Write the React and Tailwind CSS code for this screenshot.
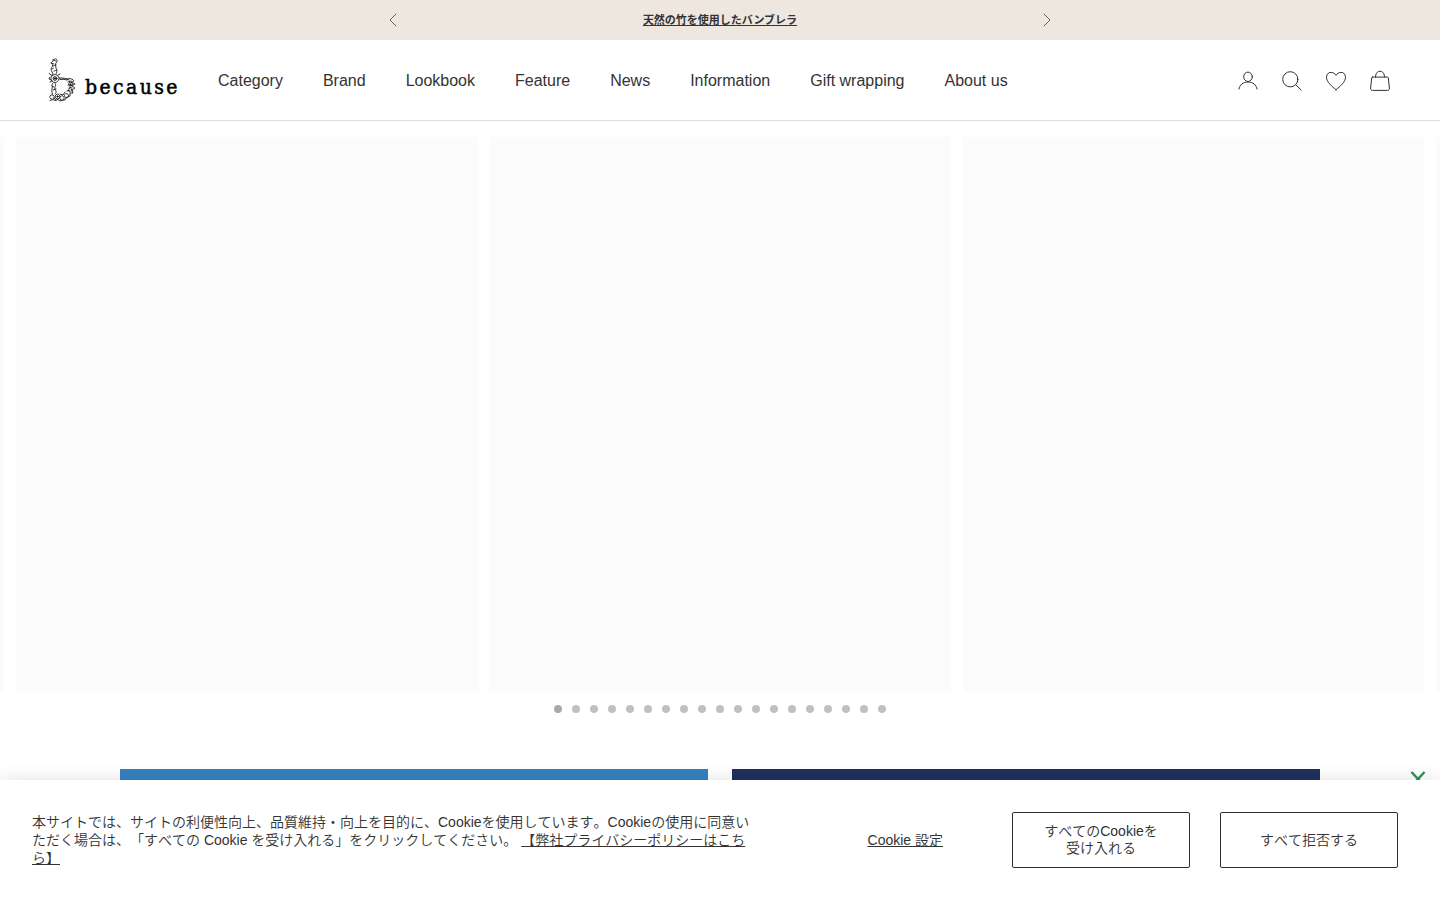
import clsx from "clsx";

const navItems = [
  "Category",
  "Brand",
  "Lookbook",
  "Feature",
  "News",
  "Information",
  "Gift wrapping",
  "About us",
];

const SLIDE_COUNT = 19;

// bouquet shaped like a "b"
const LogoMark = () => (
  <svg
    width="28"
    height="46"
    viewBox="0 0 28 46"
    fill="none"
    stroke="#111"
    strokeWidth="0.85"
    strokeLinecap="round"
    className="shrink-0"
  >
    <path
      d="M7 2c-3 0-1 2-3 3s2 2 0 5 0 4 1 7l-1 1M8 2c2 1 1 3 0 4s0 4 0 5 2 3 0 6"
      strokeDasharray="3 0.8"
    />
    <path d="M5 3l3 1M3 6l3 1M5 9l3-1M4 12l2-1M6 14l3-1" strokeDasharray="1.5 1" />
    <circle cx="7" cy="21.5" r="4" strokeDasharray="4 0.8" />
    <circle cx="7" cy="21.5" r="1.9" />
    <circle cx="7" cy="21.5" r="0.8" fill="#222" />
    <path d="M1 16.5l3 2M2 20l-1 2 2 1M10 18l2-1M2 25l2-1" />
    <path d="M11 21c4 0 7 0 10 2M12 22.5c3-.5 5 0 7 .5" strokeWidth="0.9" />
    <path
      d="M19 22c3-1 6 0 7 2l-3 1 4 2-3 2 3 2-3 2 1 3-3 0 0 3-2 1"
      strokeDasharray="2.5 0.7"
    />
    <path d="M20 25l3-1M20 28l4 0M21 30l3 1M19 34l3-1M22 26l1 3" />
    <circle cx="22.5" cy="27" r="1.9" strokeDasharray="2 1" />
    <circle cx="22" cy="33" r="1.9" strokeDasharray="2 1" />
    <path
      d="M5 26c-2 2 0 4-1 6s1 4 0 6M7 26c2 2-1 4 0 6s2 3 0 5"
      strokeDasharray="3 0.9"
    />
    <path d="M4 29l2 1M5 33l3-1" />
    <circle cx="4" cy="40" r="2.2" strokeDasharray="2 1" />
    <circle cx="9.5" cy="39.5" r="2.4" strokeDasharray="3 0.7" />
    <circle cx="9.5" cy="39.5" r="0.7" fill="#222" />
    <circle cx="14" cy="41" r="2.2" strokeDasharray="2 0.8" />
    <circle cx="18.5" cy="38.5" r="2" strokeDasharray="1.5 0.8" />
    <path d="M2 43.5l3-1 2 1 3-1 2 1.5 3-1 2 0 1-2 2-1M6 41l2 2M12 37l3 1 2-3" />
  </svg>
);

const Logo = () => (
  <a className="flex w-[131px] items-center">
    <LogoMark />
    <span className="ml-[9px] mt-[14px] whitespace-nowrap font-['DejaVu_Serif_Condensed','DejaVu_Serif',serif] text-[21px] leading-6 tracking-[2.4px] text-black [-webkit-text-stroke:0.5px_#000]">
      because
    </span>
  </a>
);

const iconPaths = {
  account: (
    <>
      <ellipse cx="12" cy="8.8" rx="4.3" ry="4.7" />
      <path d="M3 21c.5-4 4-7 9-7s8.5 3 9 7" />
    </>
  ),
  search: (
    <>
      <circle cx="10.3" cy="11.3" r="7.6" />
      <path d="M16 17l5.2 5" />
    </>
  ),
  wishlist: (
    <path d="M12 21.7C8 18.5 2.5 14 2.5 9.3 2.5 6 4.5 4.4 7 4.4c2.2 0 3.9 1.1 5 3 1.1-1.9 2.8-3 5-3 2.5 0 4.5 1.6 4.5 4.9 0 4.7-5.5 9.2-9.5 12.4z" />
  ),
  bag: (
    <>
      <path d="M4.5 9.1h15c.6 0 .8.3.8.8l1.1 10.2c.1 1.3-.6 2.3-1.9 2.3h-15c-1.3 0-2-1-1.9-2.3L3.7 9.9c0-.5.2-.8.8-.8z" />
      <path d="M7.5 9c0-3.500 1.800-5.700 4.500-5.700s4.500 2.200 4.500 5.700" />
    </>
  ),
};

const HeaderIcon = ({ name }) => (
  <button className="h-6 w-6">
    <svg
      width="24"
      height="24"
      viewBox="0 0 24 24"
      fill="none"
      stroke="#333"
      strokeLinecap="round"
      strokeLinejoin="round"
    >
      {iconPaths[name]}
    </svg>
  </button>
);

const Arrow = ({ flip }) => (
  <svg
    width="8"
    height="14"
    viewBox="0 0 8 14"
    fill="none"
    stroke="#444"
    strokeWidth="0.8"
    className={clsx(flip && "rotate-180")}
  >
    <path d="M7.3 0.7L1 7l6.3 6.3" />
  </svg>
);

const Announcement = () => (
  <div className="flex h-10 shrink-0 items-center justify-center bg-[#eee7e0]">
    <div className="flex w-[662px] items-center justify-between">
      <Arrow />
      <a className="text-[11px] font-semibold underline">
        天然の竹を使用したバンブレラ
      </a>
      <Arrow flip />
    </div>
  </div>
);

const Header = () => (
  <header className="flex h-[81px] shrink-0 items-center border-b border-[#dedede] px-12">
    <Logo />
    <nav className="ml-[39px] flex gap-10 pt-0.5 text-base">
      {navItems.map((item) => (
        <a key={item}>{item}</a>
      ))}
    </nav>
    <div className="ml-auto flex gap-5">
      {Object.keys(iconPaths).map((name) => (
        <HeaderIcon key={name} name={name} />
      ))}
    </div>
  </header>
);

const Carousel = () => (
  <section className="mt-4 shrink-0 overflow-hidden">
    <div className="-ml-[457.15px] flex gap-3">
      {[0, 1, 2, 3, 4].map((slide) => (
        <div key={slide} className="h-[554px] w-[461.35px] shrink-0 bg-[#fbfbfb]" />
      ))}
    </div>
    <div className="mt-[14px] flex justify-center gap-[10px]">
      {Array.from({ length: SLIDE_COUNT }, (_, i) => (
        <span
          key={i}
          className={clsx(
            "h-2 w-2 rounded-full",
            i === 0 ? "bg-[#a9a9a9]" : "bg-[#c0c0c0]"
          )}
        />
      ))}
    </div>
  </section>
);

const Banners = () => (
  <section className="mt-14 grid shrink-0 grid-cols-2 gap-6 px-[120px]">
    <div className="h-[200px] bg-[#3781c0]" />
    <div className="h-[200px] bg-[#1f305e]" />
  </section>
);

const CookieBar = () => (
  <div className="absolute inset-x-0 bottom-0 flex h-[120px] items-center bg-white pl-8 pr-[42px] text-sm font-[350] leading-[18px] shadow-[0_0_18px_rgba(0,0,0,0.12)] [font-kerning:none] [text-spacing-trim:space-all]">
    <p className="w-[720px]">
      本サイトでは、サイトの利便性向上、品質維持・向上を目的に、Cookieを使用しています。Cookieの使用に同意いただく場合は、「すべての
      Cookie を受け入れる」をクリックしてください。{" "}
      <a className="underline">【弊社プライバシーポリシーはこちら】</a>
    </p>
    <div className="ml-auto flex items-center">
      <button className="mr-[69px] underline">Cookie 設定</button>
      <button className="mr-[30px] h-14 w-[178px] rounded-[2px] border border-[#2d2d2d] leading-[17px]">
        すべてのCookieを
        <br />
        受け入れる
      </button>
      <button className="h-14 w-[178px] rounded-[2px] border border-[#2d2d2d]">
        すべて拒否する
      </button>
    </div>
  </div>
);

const App = () => {
  return (
    <div className="relative flex h-[900px] flex-col overflow-hidden bg-white font-['Liberation_Sans','Noto_Sans_CJK_JP',sans-serif] text-[#333]">
      <Announcement />
      <Header />
      <Carousel />
      <Banners />
      <svg
        className="absolute left-[1410px] top-[770px]"
        width="16"
        height="16"
        viewBox="0 0 16 16"
        fill="none"
        stroke="#2a9650"
        strokeWidth="2.5"
      >
        <path d="M1.5 2L8 9l6.5-7M1.5 16L8 9l6.5 7" />
      </svg>
      <CookieBar />
    </div>
  );
};

export default App;
